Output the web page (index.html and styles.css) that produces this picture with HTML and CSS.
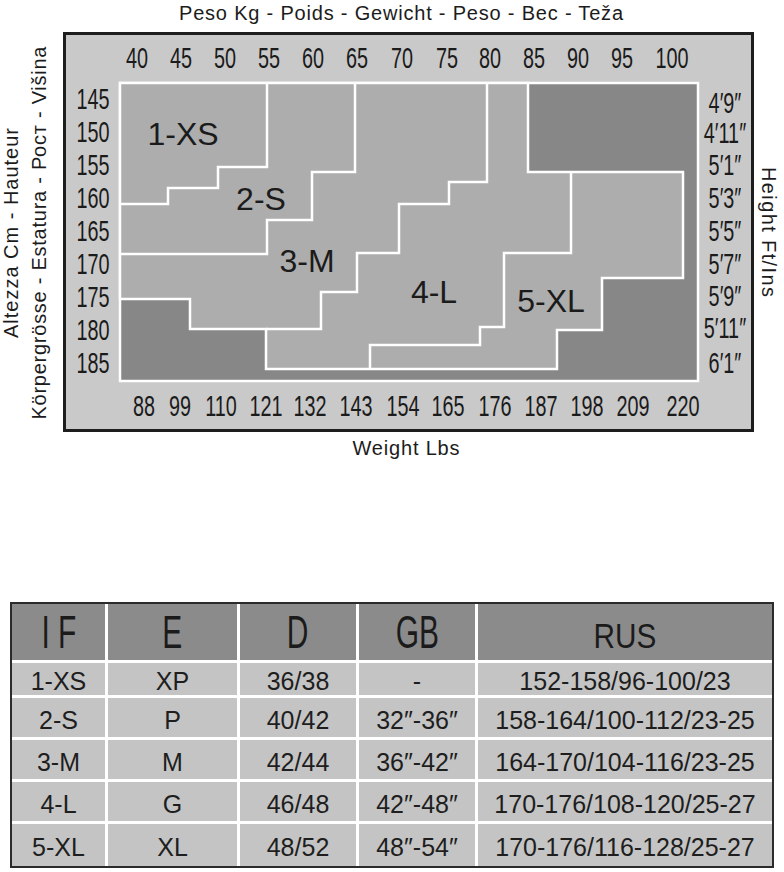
FILE: index.html
```html
<!DOCTYPE html>
<html lang="en">
<head>
<meta charset="utf-8">
<title>Size chart</title>
<link rel="stylesheet" href="styles.css">
</head>
<body>
<main class="page">
  <svg class="chart" viewBox="0 0 784 470" xmlns="http://www.w3.org/2000/svg">
    <text class="axis" x="401" y="20" textLength="444">Peso Kg - Poids - Gewicht - Peso - Bec - Teža</text>
    <text class="axis" transform="translate(18,233) rotate(-90)" textLength="210">Altezza Cm - Hauteur</text>
    <text class="axis" transform="translate(46,233) rotate(-90)" textLength="373">Körpergrösse - Estatura - Рост - Višina</text>
    <text class="axis" transform="translate(762,232) rotate(90)" textLength="130">Height Ft/Ins</text>
    <text class="axis" x="406" y="455" textLength="107">Weight Lbs</text>

    <rect class="frame" x="64.5" y="33.5" width="688" height="397"/>
    <rect class="dark" x="120" y="83" width="578" height="298"/>
    <path class="mid" d="M120,83 H528 V172 H683 V278 H602 V330 H557 V369 H266 V329 H190 V299 H120 Z"/>
    <path class="line" d="M267,83 V167 H218 V188 H168 V204 H120"/>
    <path class="line" d="M355,83 V172 H312 V220 H267 V254 H120"/>
    <path class="line" d="M487,83 V182 H449 V204 H399 V253 H357 V292 H321 V329 H266"/>
    <path class="line" d="M370,369 V345 H480 V327 H504 V253 H571 V172"/>

    <g class="nums">
      <text class="num" x="137" y="68">40</text>
      <text class="num" x="181" y="68">45</text>
      <text class="num" x="225" y="68">50</text>
      <text class="num" x="269" y="68">55</text>
      <text class="num" x="313" y="68">60</text>
      <text class="num" x="357" y="68">65</text>
      <text class="num" x="402" y="68">70</text>
      <text class="num" x="447" y="68">75</text>
      <text class="num" x="490" y="68">80</text>
      <text class="num" x="534" y="68">85</text>
      <text class="num" x="578" y="68">90</text>
      <text class="num" x="622" y="68">95</text>
      <text class="num" x="672" y="68">100</text>

      <text class="num" x="93" y="109">145</text>
      <text class="num" x="93" y="142">150</text>
      <text class="num" x="93" y="175">155</text>
      <text class="num" x="93" y="208">160</text>
      <text class="num" x="93" y="241">165</text>
      <text class="num" x="93" y="274">170</text>
      <text class="num" x="93" y="307">175</text>
      <text class="num" x="93" y="340">180</text>
      <text class="num" x="93" y="373">185</text>

      <text class="num" x="725" y="113">4′9″</text>
      <text class="num" x="725" y="143">4′11″</text>
      <text class="num" x="725" y="175">5′1″</text>
      <text class="num" x="725" y="208">5′3″</text>
      <text class="num" x="725" y="241">5′5″</text>
      <text class="num" x="725" y="274">5′7″</text>
      <text class="num" x="725" y="306">5′9″</text>
      <text class="num" x="725" y="338">5′11″</text>
      <text class="num" x="725" y="373">6′1″</text>

      <text class="num" x="144" y="416">88</text>
      <text class="num" x="180" y="416">99</text>
      <text class="num" x="221" y="416">110</text>
      <text class="num" x="266" y="416">121</text>
      <text class="num" x="310" y="416">132</text>
      <text class="num" x="356" y="416">143</text>
      <text class="num" x="403" y="416">154</text>
      <text class="num" x="448" y="416">165</text>
      <text class="num" x="495" y="416">176</text>
      <text class="num" x="541" y="416">187</text>
      <text class="num" x="587" y="416">198</text>
      <text class="num" x="633" y="416">209</text>
      <text class="num" x="683" y="416">220</text>
    </g>

    <text class="size" x="183" y="145">1-XS</text>
    <text class="size" x="261" y="210">2-S</text>
    <text class="size" x="307" y="272">3-M</text>
    <text class="size" x="434" y="303">4-L</text>
    <text class="size" x="551" y="312">5-XL</text>
  </svg>

  <div class="table">
    <div class="c h"><span>I F</span></div>
    <div class="c h"><span>E</span></div>
    <div class="c h"><span>D</span></div>
    <div class="c h"><span>GB</span></div>
    <div class="c h rus"><span>RUS</span></div>

    <div class="c r1">1-XS</div>
    <div class="c r1">XP</div>
    <div class="c r1">36/38</div>
    <div class="c r1">-</div>
    <div class="c r1">152-158/96-100/23</div>

    <div class="c">2-S</div>
    <div class="c">P</div>
    <div class="c">40/42</div>
    <div class="c">32″-36″</div>
    <div class="c">158-164/100-112/23-25</div>

    <div class="c">3-M</div>
    <div class="c">M</div>
    <div class="c">42/44</div>
    <div class="c">36″-42″</div>
    <div class="c">164-170/104-116/23-25</div>

    <div class="c">4-L</div>
    <div class="c">G</div>
    <div class="c">46/48</div>
    <div class="c">42″-48″</div>
    <div class="c">170-176/108-120/25-27</div>

    <div class="c">5-XL</div>
    <div class="c">XL</div>
    <div class="c">48/52</div>
    <div class="c">48″-54″</div>
    <div class="c">170-176/116-128/25-27</div>
  </div>
</main>
</body>
</html>
```

FILE: styles.css
```css
html, body {
  margin: 0;
  padding: 0;
  background: #ffffff;
}

.page {
  width: 784px;
  font-family: "Liberation Sans", Arial, sans-serif;
  color: #1c1c1c;
}

.chart {
  display: block;
  width: 784px;
  height: 470px;
}

.axis {
  font-family: "Liberation Sans", Arial, sans-serif;
  font-size: 20px;
  fill: #1c1c1c;
  text-anchor: middle;
}

.frame {
  fill: #c9c9c9;
  stroke: #1d1d1d;
  stroke-width: 3;
}

.dark {
  fill: #878787;
  stroke: #ffffff;
  stroke-width: 2.5;
}

.mid {
  fill: #adadad;
  stroke: #ffffff;
  stroke-width: 2.5;
}

.line {
  fill: none;
  stroke: #ffffff;
  stroke-width: 2.5;
}

.num {
  font-family: "Liberation Sans", Arial, sans-serif;
  font-size: 30px;
  fill: #1b1b1b;
  text-anchor: middle;
  transform-box: fill-box;
  transform-origin: center;
  transform: scaleX(0.66);
}

.size {
  font-family: "Liberation Sans", Arial, sans-serif;
  font-size: 32px;
  fill: #1b1b1b;
  text-anchor: middle;
}

.table {
  margin: 132px 0 0 10px;
  width: 760px;
  border: 2px solid #2b2b2b;
  background: #ffffff;
  display: grid;
  grid-template-columns: 93px 129px 116px 116px 294px;
  grid-template-rows: 56px 32px 39px 39px 39px 42px;
  gap: 3px;
}

.c {
  background: #c4c4c4;
  display: flex;
  align-items: center;
  justify-content: center;
  font-size: 25px;
  line-height: 1;
  padding-top: 5px;
  color: #1e1e1e;
  white-space: nowrap;
}

.c.r1 {
  padding-top: 4px;
}

.c.h {
  background: #8b8b8b;
  font-size: 46px;
  padding-top: 0;
  color: #1b1b1b;
}

.c.h span {
  display: inline-block;
  transform: scaleX(0.65);
}

.c.h.rus {
  font-size: 35px;
  padding-top: 6px;
}

.c.h.rus span {
  transform: scaleX(0.85);
}
```
